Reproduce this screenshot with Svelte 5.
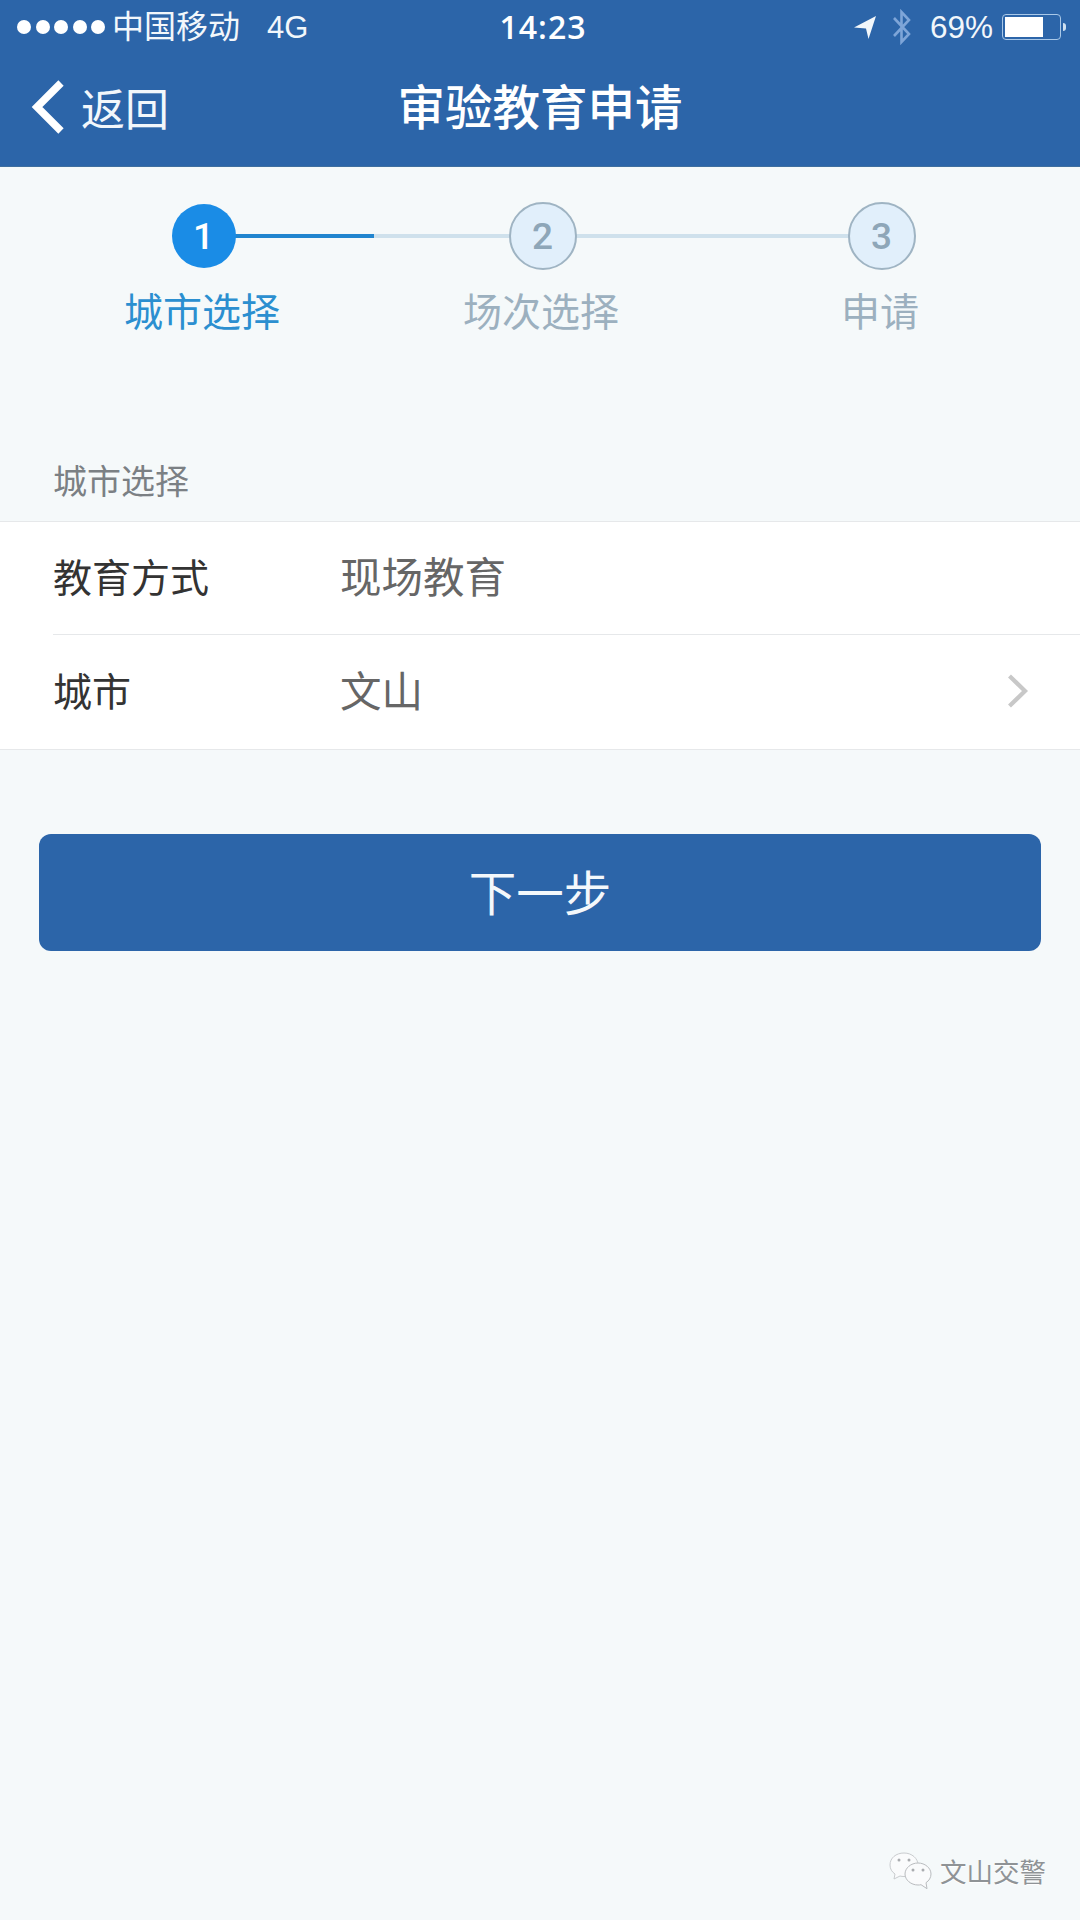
<script lang="ts">
  const steps = [
    { n: 1, label: '城市选择', active: true },
    { n: 2, label: '场次选择', active: false },
    { n: 3, label: '申请', active: false }
  ];
</script>

<div class="page">
  <header class="top">
    <div class="status">
      <div class="status-left">
        <span class="dots"><i></i><i></i><i></i><i></i><i></i></span>
        <span class="carrier">中国移动</span>
        <span class="net">4G</span>
      </div>
      <div class="time">14:23</div>
      <div class="status-right">
        <svg class="loc" width="24" height="26" viewBox="0 0 24 26"><path d="M1 13.5 23 2 15.5 25 13 14.5Z" fill="#f2f7fb" /></svg>
        <svg class="bt" width="20" height="36" viewBox="0 0 20 36"><path d="M2 9 17 25 9.5 33V3L17 11 2 27" fill="none" stroke="#7ea5d8" stroke-width="2.6" /></svg>
        <span class="pct">69%</span>
        <span class="battery"><span class="fill"></span></span>
        <span class="nub"></span>
      </div>
    </div>
    <nav class="nav">
      <div class="back">
        <svg width="36" height="56" viewBox="0 0 36 56"><path d="M31 4 7 28 31 52" fill="none" stroke="#fff" stroke-width="7.5" /></svg>
        <span>返回</span>
      </div>
      <h1>审验教育申请</h1>
      <div></div>
    </nav>
  </header>

  <section class="stepper">
    {#each steps as s, i}
      <div class="step" class:active={s.active}>
        {#if i < steps.length - 1}
          <span class="line"></span>
        {/if}
        <span class="circle">{s.n}</span>
        <span class="label">{s.label}</span>
      </div>
    {/each}
  </section>

  <div class="section-title">城市选择</div>

  <section class="list">
    <div class="row">
      <span class="key">教育方式</span>
      <span class="value">现场教育</span>
    </div>
    <div class="row">
      <span class="key">城市</span>
      <span class="value">文山</span>
      <svg class="chev" width="22" height="34" viewBox="0 0 22 34"><path d="M2.5 2 18 17 2.5 32" fill="none" stroke="#c8c8c8" stroke-width="4.2" /></svg>
    </div>
  </section>

  <button type="button" class="next"><span>下一步</span></button>

  <div class="mark">
    <svg width="44" height="38" viewBox="0 0 44 38">
      <path d="M15 1C7 1 1 6 1 13c0 4 2 7 5 9l-1 5 6-3c1 .4 3 .5 4 .5 8 0 14-5 14-11.500S23 1 15 1Z" fill="#fafbfc" stroke="#c9cccf" stroke-width="1" />
      <path d="M29 11c-7 0-13 5-13 11s6 11 13 11c1 0 2 0 3-.3l6 4-1-6c3-2 5-5 5-8.700 0-6-6-11-13-11Z" fill="#fafbfc" stroke="#b9bcbf" stroke-width="1" />
      <circle cx="10" cy="8" r="1.500" fill="#a9acaf" /><circle cx="20" cy="8" r="1.500" fill="#a9acaf" />
      <circle cx="24" cy="18" r="1.500" fill="#a9acaf" /><circle cx="34" cy="18" r="1.500" fill="#a9acaf" />
    </svg>
    <span>文山交警</span>
  </div>
</div>

<style>
  :global(body) {
    margin: 0;
    background: #f5f9fa;
  }

  .page {
    position: relative;
    width: 1080px;
    height: 1920px;
    overflow: hidden;
    background: #f5f9fa;
    font-family: 'Noto Sans CJK SC', 'Liberation Sans', sans-serif;
  }

  .top {
    height: 167px;
    background: #2c65a9;
    color: #f2f7fb;
    border-bottom: 1px solid #3f6f9f;
    box-sizing: border-box;
  }

  .status {
    display: grid;
    grid-template-columns: 1fr auto 1fr;
    align-items: center;
    height: 54px;
    padding: 0 14px 0 17px;
  }

  .status-left,
  .status-right {
    display: flex;
    align-items: center;
  }

  .status-right {
    justify-content: flex-end;
  }

  .dots {
    display: flex;
    gap: 4.500px;
  }

  .dots i {
    width: 14px;
    height: 14px;
    border-radius: 50%;
    background: #fff;
  }

  .carrier {
    margin-left: 7px;
    padding-bottom: 6px;
    font-size: 32px;
    line-height: 1;
  }

  .net {
    margin-left: 27px;
    padding-top: 2px;
    font: 31px 'Liberation Sans', sans-serif;
  }

  .time {
    margin-left: 3px;
    padding-bottom: 2px;
    font: 600 32px 'Open Sans', 'Liberation Sans', sans-serif;
    letter-spacing: 1px;
    color: #fff;
  }

  .bt {
    margin-left: 15px;
  }

  .pct {
    margin-left: 18px;
    font: 31.500px 'Liberation Sans', sans-serif;
  }

  .battery {
    margin-left: 9px;
    display: block;
    width: 59px;
    height: 26px;
    padding: 2px;
    box-sizing: border-box;
    border: 1.500px solid #a9c8e8;
    border-radius: 4px;
  }

  .fill {
    display: block;
    width: 38px;
    height: 100%;
    background: #fff;
  }

  .nub {
    width: 3px;
    height: 8px;
    margin-left: 2px;
    border-radius: 0 3px 3px 0;
    background: #cfe0f0;
  }

  .nav {
    display: grid;
    grid-template-columns: 1fr auto 1fr;
    align-items: center;
    height: 112px;
    padding-bottom: 4px;
    box-sizing: border-box;
  }

  .back {
    display: flex;
    align-items: center;
    gap: 15px;
    padding-left: 30px;
    padding-bottom: 2px;
    font-size: 44px;
    line-height: 1;
    color: #f2f7fb;
  }

  h1 {
    margin: 0;
    padding-bottom: 7px;
    font-size: 47.500px;
    font-weight: 500;
    line-height: 1;
    color: #fff;
  }

  .stepper {
    display: grid;
    grid-template-columns: repeat(3, 339px);
    padding: 35px 0 0 34px;
    height: 293px;
    box-sizing: border-box;
  }

  .step {
    position: relative;
    display: flex;
    flex-direction: column;
    align-items: center;
  }

  .circle {
    position: relative;
    display: flex;
    align-items: center;
    justify-content: center;
    width: 68px;
    height: 68px;
    box-sizing: border-box;
    border: 2px solid #9fb4c3;
    border-radius: 50%;
    background: #e1effb;
    color: #8ea6b8;
    font: 500 37px Roboto, 'Liberation Sans', sans-serif;
  }

  .active .circle {
    width: 64px;
    height: 64px;
    margin: 2px;
    border: none;
    background: #1a8ce6;
    color: #fff;
  }

  .line {
    position: absolute;
    top: 32px;
    left: 50%;
    width: 339px;
    height: 4px;
    background: #cfe1ec;
  }

  .active .line {
    background: linear-gradient(to right, #2185cf 170px, #cfe1ec 170px);
  }

  .label {
    margin-top: 11px;
    margin-right: 3px;
    font-size: 39px;
    line-height: 56px;
    color: #9cb0bf;
  }

  .active .label {
    color: #2b8fd0;
  }

  .section-title {
    height: 61px;
    padding-left: 53px;
    font-size: 34px;
    line-height: 39px;
    color: #7b8084;
  }

  .list {
    background: #fff;
    border-top: 1px solid #e6e8ea;
    border-bottom: 1px solid #e6e8ea;
    padding-left: 53px;
  }

  .row {
    display: flex;
    align-items: center;
    height: 112px;
  }

  .row + .row {
    border-top: 1px solid #e6e8ea;
    height: 114px;
  }

  .key {
    width: 287px;
    padding-bottom: 6px;
    font-size: 39px;
    color: #333;
  }

  .value {
    flex: 1;
    padding-bottom: 6px;
    font-size: 41.500px;
    color: #666;
  }

  .chev {
    margin-right: 51px;
    margin-bottom: 2px;
  }

  .next {
    display: block;
    width: 1002px;
    height: 117px;
    margin: 84px 0 0 39px;
    padding: 0 0 5px;
    border: none;
    border-radius: 12px;
    background: #2c65a9;
    color: #f4f8fb;
    font: 47.500px 'Noto Sans CJK SC', sans-serif;
  }

  .mark {
    position: absolute;
    left: 889px;
    top: 1852px;
    display: flex;
    align-items: center;
    gap: 7px;
    font-size: 26.500px;
    line-height: 38px;
    color: #8f9396;
    text-shadow: 0 1px 1px #fff;
  }
</style>
